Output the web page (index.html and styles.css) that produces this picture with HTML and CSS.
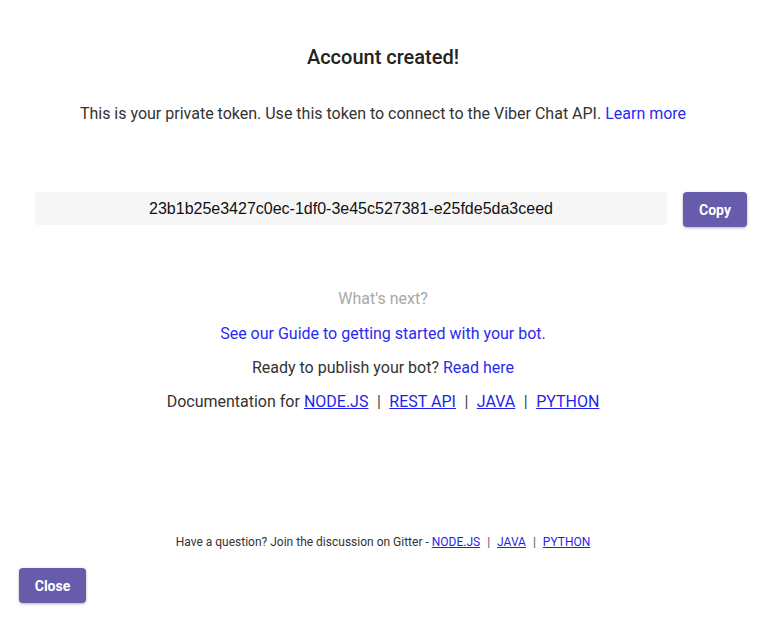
FILE: index.html
```html
<!DOCTYPE html>
<html>
<head>
<meta charset="utf-8">
<link rel="stylesheet" href="styles.css">
</head>
<body>
<div class="page">
  <h1 class="title">Account created!</h1>
  <p class="intro">This is your private token. Use this token to connect to the Viber Chat API. <a class="link" href="#">Learn more</a></p>
  <div class="token-row">
    <div class="token">23b1b25e3427c0ec-1df0-3e45c527381-e25fde5da3ceed</div>
    <button class="btn copy">Copy</button>
  </div>
  <div class="next">
    <p class="next-title">What's next?</p>
    <p class="line first"><a class="link" href="#">See our Guide to getting started with your bot.</a></p>
    <p class="line">Ready to publish your bot? <a class="link" href="#">Read here</a></p>
    <p class="line">Documentation for <a class="ulink" href="#">NODE.JS</a><span class="sep">|</span><a class="ulink" href="#">REST API</a><span class="sep">|</span><a class="ulink" href="#">JAVA</a><span class="sep">|</span><a class="ulink" href="#">PYTHON</a></p>
  </div>
  <p class="footer">Have a question? Join the discussion on Gitter - <a class="ulink" href="#">NODE.JS</a><span class="sep small">|</span><a class="ulink" href="#">JAVA</a><span class="sep small">|</span><a class="ulink" href="#">PYTHON</a></p>
  <div class="actions">
    <button class="btn close">Close</button>
  </div>
</div>
</body>
</html>
```

FILE: styles.css
```css
html, body {
  margin: 0;
  padding: 0;
  background: #ffffff;
}
body {
  font-family: Roboto, "Noto Sans", Arial, sans-serif;
  color: #333333;
}
.page {
  width: 766px;
  height: 618px;
  box-sizing: border-box;
  padding: 44px 19px 0 19px;
  display: flex;
  flex-direction: column;
}
.title {
  margin: 0;
  text-align: center;
  font-size: 20px;
  font-weight: 500;
  line-height: 26px;
  color: #222222;
}
.intro {
  margin: 34px 0 0 0;
  text-align: center;
  font-size: 16px;
  line-height: 20px;
  color: #333333;
}
.link {
  color: #2b2bf0;
  text-decoration: none;
}
.ulink {
  color: #1f1fee;
  text-decoration: underline;
}
.token-row {
  margin: 68px 0 0 16px;
  display: flex;
  align-items: flex-start;
  gap: 16px;
}
.token {
  width: 632px;
  height: 33px;
  background: #f7f6f7;
  border-radius: 2px;
  font-family: "Liberation Sans", Arial, sans-serif;
  font-size: 16px;
  line-height: 33px;
  text-align: center;
  color: #111111;
  white-space: nowrap;
  overflow: hidden;
}
.btn {
  border: none;
  background: #665cab;
  color: #ffffff;
  font-family: Roboto, Arial, sans-serif;
  font-weight: 700;
  font-size: 14px;
  border-radius: 4px;
  box-shadow: 0 1px 3px rgba(0,0,0,0.3);
  padding: 0;
  cursor: pointer;
}
.copy {
  width: 64px;
  height: 35px;
}
.next {
  margin-top: 62px;
  text-align: center;
}
.next p {
  margin: 0;
  font-size: 16px;
  line-height: 20px;
}
.next-title {
  color: #a8a8a8;
}
.next .line {
  margin-top: 14px;
  color: #333333;
}
.next .line.first {
  margin-top: 15px;
}
.sep {
  margin: 0 8.5px;
  color: #444444;
}
.footer {
  margin: 122px 0 0 0;
  text-align: center;
  font-size: 12px;
  line-height: 16px;
  color: #333333;
}
.sep.small {
  margin: 0 7px;
  color: #555555;
}
.actions {
  margin-top: 18px;
}
.close {
  width: 67px;
  height: 35px;
}
```
